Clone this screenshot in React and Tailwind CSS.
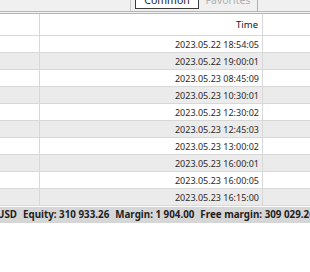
const times = [
  '2023.05.22 18:54:05',
  '2023.05.22 19:00:01',
  '2023.05.23 08:45:09',
  '2023.05.23 10:30:01',
  '2023.05.23 12:30:02',
  '2023.05.23 12:45:03',
  '2023.05.23 13:00:02',
  '2023.05.23 16:00:01',
  '2023.05.23 16:00:05',
  '2023.05.23 16:15:00',
];

export default function App() {
  return (
    <div className="w-[310px] h-[272px] overflow-hidden bg-white text-[#1a1a1a] font-['Noto_Sans',sans-serif] text-[9px] leading-none">
      {/* Tab strip, cut at the top */}
      <div className="h-[11px] bg-[#f0f0f0] flex items-end overflow-hidden">
        <div className="w-[130px] h-full" />
        <div className="w-px h-full bg-[#c8c8c8]" />
        <div className="w-[4px]" />
        <div className="w-[64px] h-[16px] mb-[2px] bg-white border border-[#3a3a3a] flex items-end justify-center pb-[3px]">
          <span className="text-[10.5px]">Common</span>
        </div>
        <div className="w-[58px] h-[16px] mb-[2px] flex items-end justify-center pb-[4px]">
          <span className="text-[10.5px] text-[#b0b0b0]">Favorites</span>
        </div>
        <div className="w-px h-full bg-[#b0b0b0]" />
      </div>
      <div className="h-[3px] border-t border-b border-[#b4b4b4] bg-[#f4f4f4]" />

      {/* Header */}
      <div className="flex h-[22px] border-b border-[#d8d8d8]">
        <div className="w-[40px] border-r border-[#d8d8d8]" />
        <div className="w-[223px] border-r border-[#d8d8d8] flex items-center justify-end pr-[4px] text-[9.5px]">
          Time
        </div>
      </div>

      {/* Rows */}
      {times.map((t, i) => (
        <div
          key={t}
          className={`flex h-[17px] border-b border-[#d8d8d8] ${i % 2 ? 'bg-[#ebebeb]' : 'bg-white'}`}
        >
          <div className="w-[40px] border-r border-[#d8d8d8]" />
          <div className="w-[223px] border-r border-[#d8d8d8] flex items-center justify-end pr-[3px] text-[#2a2a2a]">
            {t}
          </div>
        </div>
      ))}

      {/* Account status */}
      <div className="h-[16px] mt-[1px] bg-[#d6d6d6] flex items-center whitespace-nowrap font-bold text-[9.8px] text-[#222]">
        <span className="-ml-[3px]">USD</span>
        <span className="ml-[6px]">Equity: 310 933.26</span>
        <span className="ml-[6px]">Margin: 1 904.00</span>
        <span className="ml-[6px]">Free margin: 309 029.26</span>
      </div>
    </div>
  );
}
